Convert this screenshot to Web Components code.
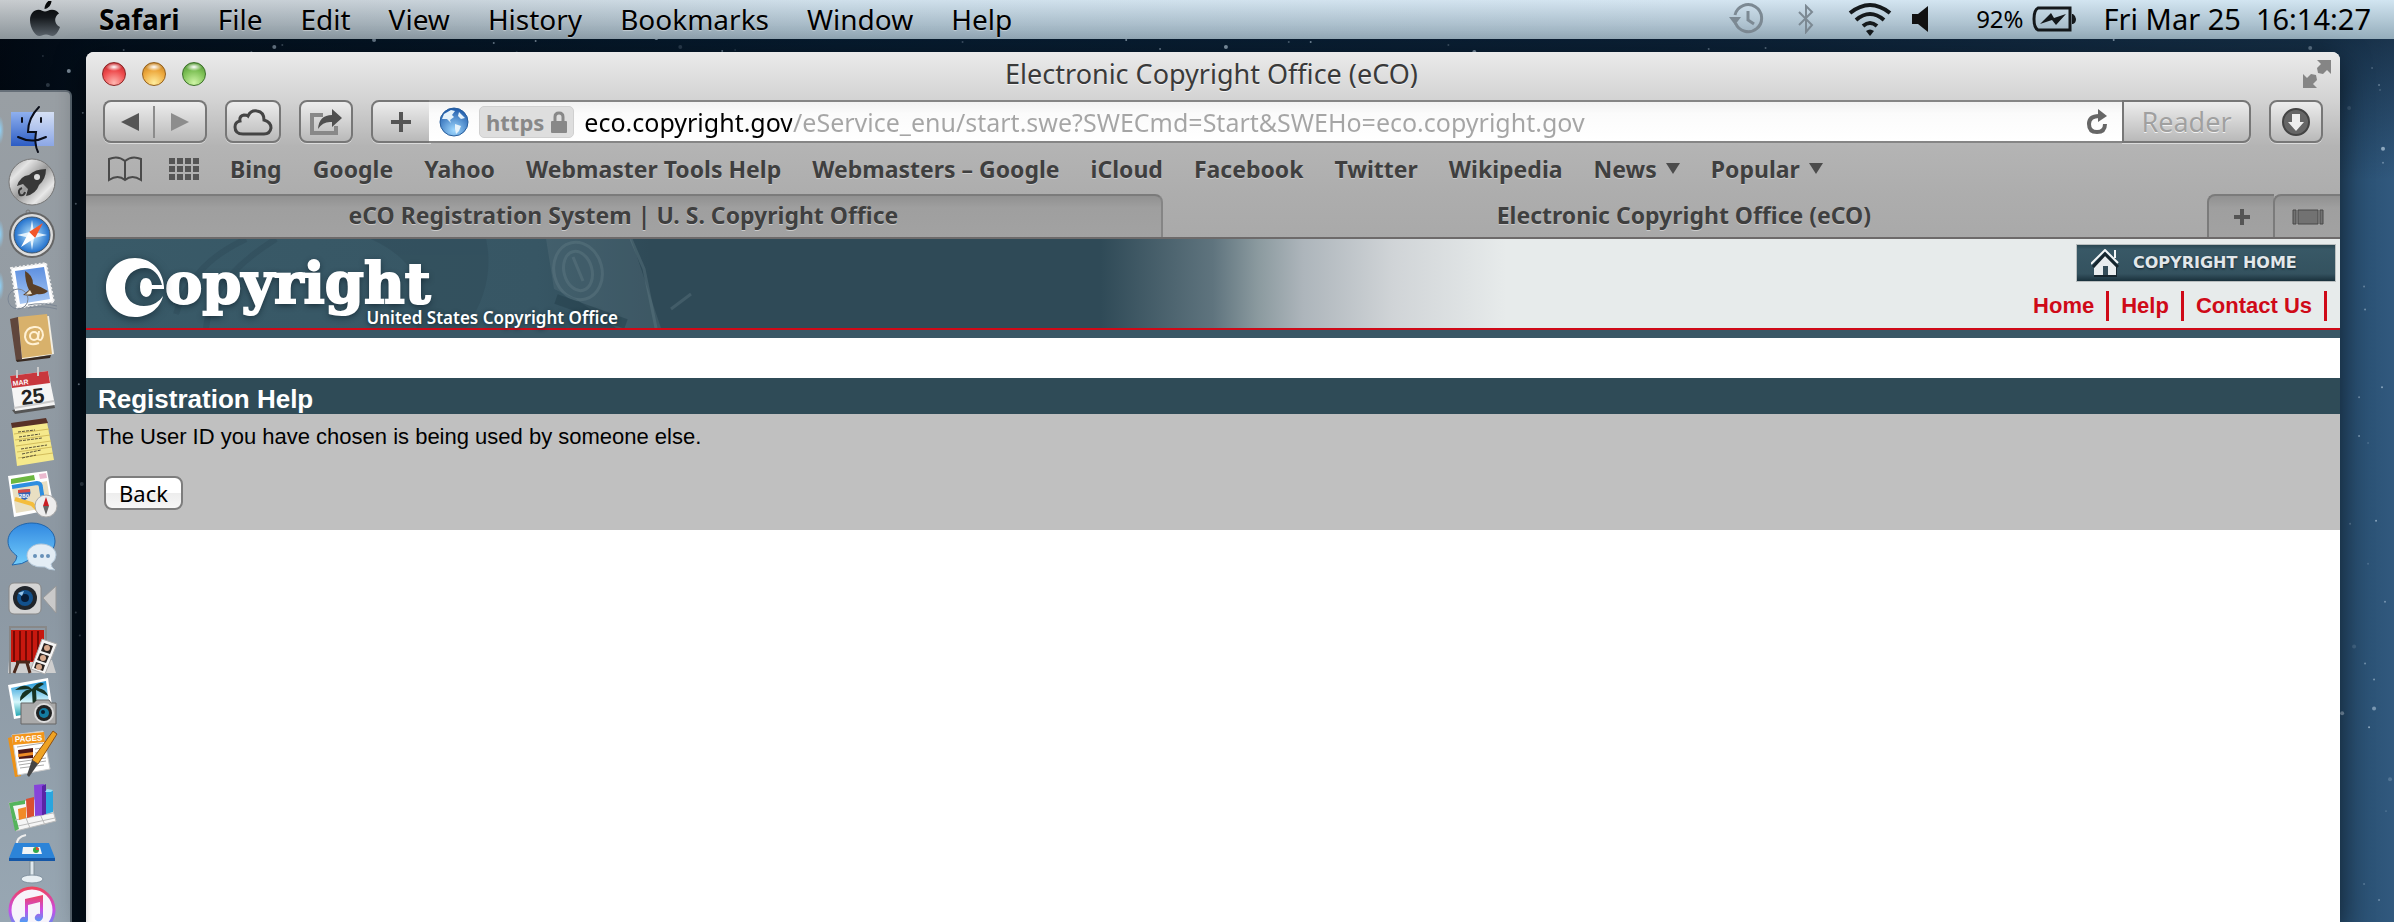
<!DOCTYPE html>
<html lang="en">
<head>
<meta charset="utf-8">
<title>Electronic Copyright Office (eCO)</title>
<style>
	html, body {
		height: 100%;
		margin: 0;
	}

	body {
		overflow: hidden;
		font-family: "Noto Sans", "Open Sans", sans-serif;
		color: #000;
	}
</style>
</head>
<body>
<desktop-screen>
	<menu-bar slot="menu">
		<menu-item strong>Safari</menu-item>
		<menu-item>File</menu-item>
		<menu-item>Edit</menu-item>
		<menu-item>View</menu-item>
		<menu-item>History</menu-item>
		<menu-item>Bookmarks</menu-item>
		<menu-item>Window</menu-item>
		<menu-item>Help</menu-item>
	</menu-bar>

	<app-dock slot="dock"></app-dock>

	<browser-window heading="Electronic Copyright Office (eCO)">
		<browser-toolbar slot="bars"></browser-toolbar>
		<bookmarks-bar slot="bars">
			<bookmark-link>Bing</bookmark-link>
			<bookmark-link>Google</bookmark-link>
			<bookmark-link>Yahoo</bookmark-link>
			<bookmark-link>Webmaster Tools Help</bookmark-link>
			<bookmark-link>Webmasters – Google</bookmark-link>
			<bookmark-link>iCloud</bookmark-link>
			<bookmark-link>Facebook</bookmark-link>
			<bookmark-link>Twitter</bookmark-link>
			<bookmark-link>Wikipedia</bookmark-link>
			<bookmark-link folder>News</bookmark-link>
			<bookmark-link folder>Popular</bookmark-link>
		</bookmarks-bar>
		<tab-strip slot="bars">
			<browser-tab>eCO Registration System | U. S. Copyright Office</browser-tab>
			<browser-tab active>Electronic Copyright Office (eCO)</browser-tab>
		</tab-strip>

		<site-header></site-header>
		<help-panel heading="Registration Help">The User ID you have chosen is being used by someone else.</help-panel>
	</browser-window>
</desktop-screen>

<script>
class BaseElement extends HTMLElement {
	constructor() {
		super();

		this.attachShadow({ mode: "open" });
		const template = document.createElement("template");
		template.innerHTML = this.constructor.markup;
		this.shadowRoot.append(template.content.cloneNode(true));
	}
}

class DesktopScreen extends BaseElement {
	connectedCallback() {
		// scatter the stars with a small fixed-seed generator
		let seed = 17;
		const next = () => (seed = (seed * 16807) % 2147483647) / 2147483647;
		let stars = "";
		for (let i = 0; i < 1400; i++) {
			const x = Math.round(next() * 2400);
			const y = Math.round(next() * 1000);
			const r = next() < 0.2 ? 2 : 1;
			stars += `<circle cx="${x}" cy="${y}" r="${r}" opacity="${(0.15 + next() * 0.45).toFixed(2)}"/>`;
		}
		this.shadowRoot.querySelector("g").innerHTML = stars;
	}
}

DesktopScreen.markup = `
<style>
	:host {
		display: flex;
		flex-direction: column;
		position: relative;
		height: 100vh;
		overflow: hidden;
		background:
			linear-gradient(180deg, rgba(2, 12, 24, 0.6) 0, rgba(2, 12, 24, 0) 180px),
			linear-gradient(90deg, #01060d 0, #04121f 5%, #0a2740 35%, #12304c 70%, #234868 97%, #31597e 100%);
	}

	.sky {
		position: absolute;
		inset: 0;
		width: 100%;
		height: 100%;
	}

	.work {
		display: flex;
		flex: 1;
		min-height: 0;
		position: relative;
	}

	::slotted([slot="menu"]) {
		position: relative;
	}
</style>
<svg class="sky" viewBox="0 0 2400 1000" preserveAspectRatio="xMidYMid slice" aria-hidden="true"><g fill="#cfe2f2"></g></svg>
<slot name="menu"></slot>
<div class="work">
	<slot name="dock"></slot>
	<slot></slot>
</div>
`;

class MenuItem extends BaseElement {}

MenuItem.markup = `
<style>
	:host {
		display: block;
	}

	button {
		border: 0;
		padding: 0;
		background: none;
		font: inherit;
		color: inherit;
		text-shadow: 0 1px 1px rgba(255, 255, 255, 0.4);
	}

	:host([strong]) button {
		font-weight: 700;
	}
</style>
<button type="button"><slot></slot></button>
`;

class MenuBar extends BaseElement {}

MenuBar.markup = `
<style>
	:host {
		display: flex;
		align-items: center;
		justify-content: space-between;
		height: 39px;
		box-sizing: border-box;
		padding: 0 23px 2px 29px;
		font-size: 28px;
		line-height: 34px;
		background:
			linear-gradient(180deg, rgba(255, 255, 255, 0.25), rgba(30, 50, 60, 0.28)),
			linear-gradient(90deg, #b6bbbf 0, #b6c2cb 15%, #bfd5e4 35%, #c6dcec 70%, #c2dcec 100%);
	}

	nav, .status {
		display: flex;
		align-items: center;
		gap: 38px;
	}

	svg {
		display: block;
	}

	.battery {
		display: flex;
		align-items: center;
		gap: 8px;
		font-size: 24px;
	}

	.glyphs {
		display: flex;
		align-items: center;
		gap: 34px;
		padding-right: 20px;
	}

	.status {
		gap: 28px;
	}

	.clock {
		font-size: 29px;
		white-space: pre;
	}

	.speaker {
		margin-left: -14px;
	}
</style>
<nav aria-label="Application menu">
	<svg width="32" height="36" viewBox="0 0 32 36" aria-hidden="true">
		<defs><linearGradient id="a" x1="0" y1="0" x2="0" y2="1"><stop offset="0" stop-color="#000"/><stop offset=".5" stop-color="#15191d"/><stop offset="1" stop-color="#59626a"/></linearGradient></defs>
		<path fill="url(#a)" d="M15.500 8C15.500 4 18 0 22.500 -2C23 3 20 7.500 15.500 8ZM16 10.500C18 10.500 19.500 8.700 23 8.700C26 8.700 28.700 10 30 12.500C24.500 16 25 23.500 31 26C29.500 30.500 26.500 35 23.500 35C21 35 20 33.500 17 33.500C14 33.500 12.800 35 10.500 35C6 35 1 27 1 19C1 12.500 5 8.700 9.500 8.700C12.500 8.700 14 10.500 16 10.500Z"/>
	</svg>
	<slot></slot>
</nav>
<div class="status">
	<div class="glyphs">
		<svg width="35" height="32" viewBox="0 0 35 32" fill="none" stroke="#7c8993" stroke-width="3" aria-hidden="true">
			<path d="M6.500 20A13.500 13.500 0 1 0 6 12"/><path d="M19 8V17L25 21"/><path fill="#7c8993" stroke="none" d="M0 14H12L6 22Z"/>
		</svg>
		<svg width="16" height="30" viewBox="0 0 16 30" fill="none" stroke="#7c8993" stroke-width="2" aria-hidden="true"><path d="M1 8L14 21L8 28V2L14 8L1 21"/></svg>
		<svg width="44" height="34" viewBox="0 0 44 34" fill="none" stroke="#15191c" stroke-width="4" aria-hidden="true">
			<path d="M2 11Q22 -5 42 11M8 18Q22 6 36 18M15 24Q22 18 29 24"/><path fill="#15191c" stroke="none" d="M18 29Q22 26 26 29L22 34Z"/>
		</svg>
		<svg class="speaker" width="16" height="26" viewBox="0 0 16 26" aria-hidden="true"><path fill="#111" d="M0 8H6L16 0V26L6 18H0Z"/></svg>
	</div>
	<div class="battery">
		<span>92%</span>
		<svg width="44" height="26" viewBox="0 0 44 26" aria-hidden="true">
			<path fill="none" stroke="#14181b" stroke-width="3" d="M6 2H38V24H6Q2 22 2 13Q2 4 6 2Z"/><path fill="#14181b" d="M40 8H41Q44 10 44 13Q44 17 41 18H40ZM8 18L19 7L22 12L34 8L24 19L20 14Z"/>
		</svg>
	</div>
	<time class="clock">Fri Mar 25  16:14:27</time>
</div>
`;

const dockIcons = {
	Finder: `
		<defs><linearGradient id="f" x1="0" y1="0" x2="0" y2="1"><stop offset="0" stop-color="#8fb0ee"/><stop offset="1" stop-color="#2c5cc4"/></linearGradient><linearGradient id="g" x1="0" y1="0" x2="0" y2="1"><stop offset="0" stop-color="#d5e0f5"/><stop offset="1" stop-color="#8ca7e6"/></linearGradient></defs>
		<path fill="url(#f)" d="M3 6H46V40H3Z"/><path fill="url(#g)" d="M28 6H46V40H29Q27 32 28 26H20Q21 14 28 6Z"/>
		<path fill="none" stroke="#0a0d18" stroke-width="2" stroke-linecap="round" d="M31 1Q20 12 20 26H28Q26 38 30 46M10 31Q24 38 38 31M14 12V16M33 12V16"/>`,
	Launchpad: `
		<defs><linearGradient id="f" x1="0" y1="0" x2="1" y2="1"><stop offset="0" stop-color="#9b9b9b"/><stop offset=".25" stop-color="#e4e4e4"/><stop offset=".5" stop-color="#999"/><stop offset=".75" stop-color="#e8e8e8"/><stop offset="1" stop-color="#8d8d8d"/></linearGradient></defs>
		<circle cx="24" cy="24" r="23" fill="url(#f)" stroke="#777"/>
		<path fill="#383838" d="M38 11Q27 11 21 17Q12 18 9 28L15 26L20 31L18 38Q28 36 31 27Q38 21 38 11Z"/><circle cx="29" cy="19" r="3" fill="#ddd"/><path fill="none" stroke="#383838" stroke-width="2" d="M14 30Q9 32 12 37Q16 38 17 34"/>`,
	Safari: `
		<defs><radialGradient id="f"><stop offset="0" stop-color="#bfeaff"/><stop offset="1" stop-color="#1f6ecb"/></radialGradient></defs>
		<circle cx="20" cy="2" r="2" fill="none" stroke="#777"/>
		<circle cx="24" cy="25" r="23" fill="#666"/><circle cx="24" cy="25" r="21" fill="#ddd"/><circle cx="24" cy="25" r="18" fill="url(#f)" stroke="#456"/>
		<path fill="#eef8ff" opacity=".9" d="M24 10L26 22L39 25L26 28L24 40L22 28L9 25L22 22Z"/><path fill="#f2572a" d="M35 13L27 28L21 22Z"/><path fill="#fff" d="M13 37L21 22L27 28Z"/>`,
	Mail: `
		<defs><linearGradient id="f" x1="0" y1="0" x2="0" y2="1"><stop offset="0" stop-color="#5d8fdf"/><stop offset="1" stop-color="#a8c8f4"/></linearGradient></defs>
		<path fill="#fff" stroke="#eee" stroke-width="2" stroke-dasharray="2 2" d="M3 6L38 1L46 40L9 46Z"/><path fill="url(#f)" d="M7 9L36 5L42 37L12 42Z"/>
		<path fill="#5b4027" d="M17 9Q25 13 25 22Q34 25 40 29Q36 33 29 32L23 34L15 33L21 28Q17 20 17 9Z"/><path fill="#e8dcc4" d="M22 28L17 33L24 32Z"/><circle cx="10" cy="37" r="10" fill="none" stroke="#7c8795"/><path d="M20 43Q34 40 49 44M20 46Q34 43 49 47" fill="none" stroke="#7c8795"/>`,
	Contacts: `
		<path fill="#f4efe3" d="M10 4L41 2L46 40L14 46Z"/><path fill="#d8b16b" d="M10 3L39 0L44 40L14 44Z"/><path fill="#60463c" d="M2 5L10 3L14 45L8 47Z"/><path fill="#382a22" d="M8 46L43 41L42 44L9 48Z"/>
		<g fill="none" stroke="#fff1d4" stroke-width="2"><circle cx="26" cy="22" r="4"/><path d="M31 17L30 25Q34 28 35 21Q34 12 26 13Q17 14 17 23Q19 33 31 29"/></g>`,
	Calendar: `
		<path fill="#555" d="M4 44L46 38L47 42L7 48Z"/><path fill="#f5f5f5" d="M2 10L40 5L47 39L7 45Z"/><path fill="#c8373d" d="M2 10L40 5L42 17L4 22Z"/><path stroke="#ccc" stroke-width="2" fill="none" d="M9 4V12M30 1V10M6 42L46 35"/>
		<text x="5" y="20" font-size="7" font-weight="700" fill="#fff" font-family="Liberation Sans, sans-serif" transform="rotate(-7 5 20)">MAR</text>
		<text x="14" y="39" font-size="21" font-weight="700" fill="#222" font-family="Liberation Sans, sans-serif" transform="rotate(-7 14 39)">25</text>`,
	Notes: `
		<path fill="#f5e98c" d="M4 8L39 4L46 42L9 48Z"/><path fill="#583127" d="M3 5L38 0L40 5L4 10Z"/><path stroke="#d3bd5c" fill="none" d="M6 16L41 11M7 22L42 17M8 28L43 23M9 34L44 29M10 40L45 35"/>
		<path stroke="#5a5138" stroke-dasharray="3 1" fill="none" d="M10 14L27 12M11 19L32 16M11 23L34 20M13 31L39 27M14 36L33 32M14 40L28 37"/>`,
	Maps: `
		<path fill="#fff" d="M0 6L39 1L46 39L6 47Z"/><path fill="#e9dfc2" d="M4 18L39 11L43 37L8 43Z"/><path fill="#6cb840" d="M3 9L26 5L27 10L3 14Z"/><path fill="#eab9cf" d="M31 4L38 3L39 8L32 9Z"/>
		<path stroke="#2d8ee0" stroke-width="4" fill="none" d="M4 17L29 13Q33 13 33 18L35 30"/><path stroke="#f4bd3d" stroke-width="4" fill="none" d="M7 29L24 34L34 44"/><path fill="#3464b3" d="M10 20L22 19Q24 27 17 30Q10 29 10 20Z"/><path fill="#d54845" d="M10 20L22 19V22L10 23Z"/>
		<text x="11" y="28" font-size="6" font-weight="700" fill="#fff" font-family="Liberation Sans, sans-serif">280</text>
		<circle cx="38" cy="36" r="11" fill="#eee" stroke="#aaa"/><path fill="#c91f25" d="M38 27L41 36H35Z"/><path fill="#666" d="M38 45L41 36H35Z"/>`,
	Messages: `
		<defs><linearGradient id="f" x1="0" y1="0" x2="0" y2="1"><stop offset="0" stop-color="#3188e0"/><stop offset="1" stop-color="#73cdfc"/></linearGradient></defs>
		<path fill="url(#f)" stroke="#2165aa" d="M24 1C37 1 47 9 47 19C47 30 36 37 23 37Q14 43 4 43Q9 38 9 34C4 30 0 26 0 19C0 9 11 1 24 1Z"/>
		<path fill="#e3edf5" stroke="#b4c8d9" d="M33 22C42 22 48 27 48 33Q48 38 43 42Q43 45 47 48Q40 48 37 45Q20 46 19 34C19 27 25 22 33 22Z"/><g fill="#6791b9"><circle cx="27" cy="34" r="2"/><circle cx="34" cy="34" r="2"/><circle cx="40" cy="34" r="2"/></g>`,
	FaceTime: `
		<rect x="1" y="9" width="32" height="31" rx="5" fill="#d4d4d4" stroke="#888"/><path fill="#cacaca" stroke="#999" d="M35 24L48 12V39Z"/><circle cx="17" cy="24" r="12" fill="#20252b"/><circle cx="17" cy="24" r="8" fill="#12518d"/><circle cx="17" cy="24" r="4" fill="#071b35"/><path fill="#9bc8ec" d="M10 19L16 17L14 22Z"/>`,
	"Photo Booth": `
		<path fill="#cfcfcf" d="M1 34H44L48 47H0Z"/><path fill="#c7180f" d="M3 4H36V36H3Z"/><path stroke="#780904" stroke-width="2" fill="none" d="M6 5V35M12 5V35M18 5V35M24 5V35M30 5V35"/><path fill="none" stroke="#888" stroke-width="2" d="M2 48V1H38V15"/><path stroke="#4a281b" stroke-width="3" fill="none" d="M8 36H22M10 37L6 47M19 37L22 47"/>
		<path fill="#f5f5f5" stroke="#aaa" d="M34 13L49 18L37 48L23 43Z"/><path fill="#2a2320" d="M36 17L45 20L42 28L33 25ZM32 27L41 30L38 37L29 34ZM28 36L37 39L35 45L26 42Z"/><g fill="#d8a98c"><circle cx="39" cy="22" r="3"/><circle cx="35" cy="32" r="3"/><circle cx="31" cy="41" r="3"/></g>`,
	iPhoto: `
		<defs><linearGradient id="f" x1="0" y1="0" x2="0" y2="1"><stop offset="0" stop-color="#1992d5"/><stop offset=".6" stop-color="#d6f7fb"/><stop offset="1" stop-color="#22a6b2"/></linearGradient></defs>
		<path fill="#fff" d="M0 7L40 0L45 34L6 41Z"/><path fill="url(#f)" d="M3 10L38 3L42 32L8 38Z"/><path fill="#173323" d="M24 11Q31 2 36 6L30 10Q38 11 40 18L28 12L29 31H25L24 13L12 23Q12 13 22 11L7 12Q17 4 24 11Z"/>
		<path fill="#aaa" stroke="#666" d="M13 25H26L29 22H41L43 25H48V46H13Z"/><circle cx="36" cy="35" r="10" fill="#ddd"/><circle cx="36" cy="35" r="8" fill="#222"/><circle cx="36" cy="35" r="5" fill="#147ba1"/><circle cx="35" cy="34" r="2" fill="#091c2e"/>`,
	Pages: `
		<path fill="#ee9217" d="M0 8L8 6L13 46L7 47Z"/><path fill="#fff" stroke="#ccc" d="M4 5L35 1L42 39L10 45Z"/><path fill="#f3951a" d="M4 5L36 2L37 12L5 15Z"/><text x="7" y="12" font-size="8" font-weight="700" fill="#fff" font-family="Liberation Sans, sans-serif" transform="rotate(-3 7 12)">PAGES</text>
		<path stroke="#aaa" fill="none" d="M9 17L35 13M10 32L38 28M11 35L38 31M12 38L36 35M27 19L34 18M27 23L34 22"/><path fill="#4e1818" d="M10 20L25 18V28L11 29Z"/><path fill="#ee8d27" d="M10 24L25 22V25L10 27Z"/><path fill="#efa323" stroke="#8e5011" d="M45 1L49 4L30 34L24 30Z"/><path fill="#444" d="M24 30L30 34L21 47L19 45Z"/>`,
	Numbers: `
		<path fill="#f5f5f5" stroke="#bbb" d="M1 21L41 15L48 39L8 49Z"/><path fill="#55b45c" d="M1 21L17 18V22L5 24L11 47L7 49Z"/><path stroke="#bbb" fill="none" d="M7 38L45 31M10 44L47 36M16 31L22 46M31 30L37 43"/>
		<path fill="#f18a29" d="M10 27L18 25V36L11 38Z"/><path fill="#d94f31" d="M18 17L26 15V34L19 36Z"/><path fill="#8743da" d="M26 3L36 2V33L27 34Z"/><path fill="#5925a6" d="M34 4L38 2V32L34 33Z"/><path fill="#2ba6df" d="M38 10L45 9V30L38 32Z"/><path fill="#91dff7" d="M37 10L39 7L45 8L43 10Z"/>`,
	Keynote: `
		<path fill="none" stroke="#eee" stroke-width="2" d="M9 11Q8 3 18 1"/><path fill="#dfe8ed" stroke="#7f8d96" d="M22 27H26V45H22Z"/><ellipse cx="24" cy="45" rx="11" ry="4" fill="#e8eff3" stroke="#8292a0"/><path fill="#2c84d8" d="M7 9H41L47 24H1Z"/><path fill="#1457a7" d="M1 24H47V27H1Z"/><path fill="#f2f5f5" d="M15 13H32L34 20H14Z"/><circle cx="28" cy="16" r="3" fill="#35a849"/><path fill="#e24d2f" d="M28 13A3 3 0 0 1 31 16H28Z"/>`,
	iTunes: `
		<defs><linearGradient id="f" x1="0" y1="0" x2="0" y2="1"><stop offset="0" stop-color="#f0425d"/><stop offset=".5" stop-color="#c94de6"/><stop offset="1" stop-color="#3aa9f6"/></linearGradient></defs>
		<circle cx="24" cy="24" r="22" fill="#f7f4fb" stroke="url(#f)" stroke-width="3"/><path fill="url(#f)" d="M17 13L35 9V31Q34 36 29 35Q25 33 28 29Q30 27 32 28V16L20 19V34Q19 39 14 38Q10 36 13 32Q15 30 17 31Z"/>`,
};

class DockIcon extends BaseElement {
	connectedCallback() {
		const name = this.getAttribute("name");
		const button = this.shadowRoot.querySelector("button");
		button.setAttribute("aria-label", name);
		button.innerHTML = `<svg width="48" height="48" viewBox="0 0 48 48" aria-hidden="true">${dockIcons[name]}</svg>`;
	}
}

DockIcon.markup = `
<style>
	:host {
		display: block;
		padding-left: 8px;
	}

	:host([running]) {
		background: radial-gradient(ellipse 4px 14px at 0 50%, #8fd0f5, rgba(143, 208, 245, 0));
	}

	button {
		display: block;
		border: 0;
		padding: 0;
		background: none;
	}

	svg {
		display: block;
		overflow: visible;
	}
</style>
<button type="button"></button>
`;

class AppDock extends BaseElement {
	connectedCallback() {
		for (let name of Object.keys(dockIcons)) {
			const icon = document.createElement("dock-icon");
			icon.setAttribute("name", name);
			if (["Finder", "Safari", "Mail"].includes(name)) {
				icon.setAttribute("running", "");
			}
			this.shadowRoot.append(icon);
		}
	}
}

AppDock.markup = `
<style>
	:host {
		display: flex;
		flex-direction: column;
		flex: none;
		gap: 4px;
		box-sizing: border-box;
		width: 72px;
		margin-top: 51px;
		padding-top: 14px;
		overflow: hidden;
		border-top: 2px solid #666f78;
		border-right: 2px solid #58656f;
		border-top-right-radius: 6px;
		background: linear-gradient(180deg, #999fa4, #8c98a3 60%, #98a7b3);
	}
</style>
`;

class BrowserWindow extends BaseElement {
	connectedCallback() {
		this.shadowRoot.querySelector("h1").textContent = this.getAttribute("heading");
	}
}

BrowserWindow.markup = `
<style>
	:host {
		display: flex;
		flex-direction: column;
		flex: 1;
		min-width: 0;
		margin: 13px 54px 0 14px;
		border-radius: 8px 8px 0 0;
		background: #fff;
		box-shadow: 0 10px 30px rgba(0, 0, 0, 0.6);
		overflow: hidden;
	}

	.chrome {
		background: linear-gradient(180deg, #ebebeb 0, #d3d3d3 48px, #b4b4b4 94px, #adadad 142px, #a9a9a9 100%);
	}

	.title {
		display: grid;
		grid-template-columns: 1fr auto 1fr;
		align-items: center;
		height: 48px;
		padding: 0 9px 4px 16px;
		box-sizing: border-box;
	}

	.lights {
		display: flex;
		gap: 16px;
	}

	.lights button {
		width: 24px;
		height: 24px;
		border: 1px solid #8a2626;
		border-radius: 50%;
		padding: 0;
		background: radial-gradient(ellipse 8px 4px at 50% 4px, #fff, rgba(255, 255, 255, 0)), radial-gradient(circle at 50% 90%, #ffb6b0, #ee4a4c 55%, #b52329);
	}

	.lights .minimize {
		border-color: #93601d;
		background: radial-gradient(ellipse 8px 4px at 50% 4px, #fff, rgba(255, 255, 255, 0)), radial-gradient(circle at 50% 90%, #ffed9c, #eda83d 55%, #b57720);
	}

	.lights .zoom {
		border-color: #3c702a;
		background: radial-gradient(ellipse 8px 4px at 50% 4px, #fff, rgba(255, 255, 255, 0)), radial-gradient(circle at 50% 90%, #cef5a6, #7dc055 55%, #498a30);
	}

	h1 {
		margin: 0;
		padding-right: 10px;
		font-size: 27px;
		font-weight: 400;
		line-height: 40px;
		color: #3a3a3a;
		text-shadow: 0 1px 0 #f5f5f5;
	}

	.expand {
		justify-self: end;
		border: 0;
		padding: 0;
		background: none;
	}

	.expand svg {
		display: block;
	}

	main {
		flex: 1;
		box-shadow: inset 6px 0 6px -6px rgba(0, 0, 0, 0.2);
	}
</style>
<div class="chrome">
	<div class="title">
		<div class="lights">
			<button type="button" aria-label="Close"></button>
			<button type="button" class="minimize" aria-label="Minimize"></button>
			<button type="button" class="zoom" aria-label="Zoom"></button>
		</div>
		<h1></h1>
		<button type="button" class="expand" aria-label="Full screen">
			<svg width="28" height="28" viewBox="0 0 28 28" aria-hidden="true"><path fill="#858585" d="M14 0H28V14L24 10L20 14L15 13L14 8L18 4ZM0 14L4 18L8 14L13 15L14 20L10 24L14 28H0Z"/></svg>
		</button>
	</div>
	<slot name="bars"></slot>
</div>
<main><slot></slot></main>
`;

class ToolButton extends BaseElement {
	connectedCallback() {
		this.shadowRoot.querySelector("button").setAttribute("aria-label", this.getAttribute("label"));
	}
}

ToolButton.markup = `
<style>
	:host {
		display: flex;
	}

	button {
		display: flex;
		align-items: center;
		justify-content: center;
		box-sizing: border-box;
		width: var(--tool-width, 54px);
		border: solid #777;
		border-width: var(--tool-border, 2px);
		border-radius: var(--tool-radius, 8px);
		padding: 0;
		background: var(--tool-divider, linear-gradient(transparent, transparent)), linear-gradient(180deg, #ededed, #b9b9b9);
		box-shadow: 0 1px 0 rgba(255, 255, 255, 0.5);
		font: inherit;
		color: #a0a0a0;
		text-shadow: 0 1px 0 #f2f2f2;
	}
</style>
<button type="button"><slot></slot></button>
`;

class BrowserToolbar extends BaseElement {}

BrowserToolbar.markup = `
<style>
	:host {
		display: flex;
		gap: 18px;
		height: 43px;
		padding: 0 17px;
	}

	svg {
		display: block;
	}

	.pair, .address {
		display: flex;
	}

	.pair tool-button:first-child {
		--tool-width: 52px;
		--tool-border: 2px 0 2px 2px;
		--tool-radius: 8px 0 0 8px;
		--tool-divider: linear-gradient(#8c8c8c, #8c8c8c) right / 2px 32px no-repeat;
	}

	.pair tool-button:last-child {
		--tool-width: 52px;
		--tool-border: 2px 2px 2px 0;
		--tool-radius: 0 8px 8px 0;
	}

	.address tool-button:first-child {
		--tool-width: 60px;
		--tool-radius: 8px 0 0 8px;
		margin-right: -2px;
	}

	.address tool-button:last-child {
		--tool-width: 129px;
		--tool-radius: 0 8px 8px 0;
	}

	.cloud {
		--tool-width: 56px;
	}

	.address {
		flex: 1;
		min-width: 0;
		font-size: 27px;
	}

	.field {
		display: flex;
		flex: 1;
		align-items: center;
		gap: 10px;
		min-width: 0;
		padding: 0 14px 0 10px;
		border: solid #858585;
		border-width: 2px 0;
		background: linear-gradient(180deg, #f2f2f2, #fbfbfb 30%, #fff);
		font-size: 25px;
	}

	.secure {
		display: flex;
		align-items: center;
		gap: 7px;
		padding: 0 6px;
		border: 1px solid #d0d0d0;
		border-radius: 5px;
		line-height: 30px;
		font-weight: 700;
		font-size: 22px;
		background: #dedede;
		color: #888;
	}

	/* host name is black, the rest of the address is grey */
	input {
		flex: 1;
		min-width: 0;
		border: 0;
		padding: 0;
		outline: 0;
		font: inherit;
		color: transparent;
		background: linear-gradient(90deg, #000 208px, #a5a5a5 208px);
		-webkit-background-clip: text;
		background-clip: text;
	}

	.reload {
		border: 0;
		padding: 0;
		background: none;
	}
</style>
<div class="pair">
	<tool-button label="Back"><svg width="18" height="18" viewBox="0 0 18 18"><path fill="#555" d="M18 0V18L0 9Z"/></svg></tool-button>
	<tool-button label="Forward"><svg width="18" height="18" viewBox="0 0 18 18"><path fill="#8d8d8d" d="M0 0V18L18 9Z"/></svg></tool-button>
</div>
<tool-button class="cloud" label="iCloud tabs"><svg width="40" height="28" viewBox="0 0 40 28"><path fill="none" stroke="#444" stroke-width="3" d="M10 26Q2 26 2 19Q2 14 7 13Q6 8 11 7Q14 7 15 8Q18 2 24 3Q31 4 31 12Q38 14 38 20Q37 26 31 26Z"/></svg></tool-button>
<tool-button label="Share"><svg width="32" height="26" viewBox="0 0 32 26"><path fill="none" stroke="#888" stroke-width="4" d="M13 6H2V24H26V17"/><path fill="#505050" d="M22 0L32 9L22 18V13Q13 12 8 20Q9 6 22 6Z"/></svg></tool-button>
<div class="address">
	<tool-button label="Add bookmark"><svg width="22" height="22" viewBox="0 0 22 22"><path fill="#555" d="M9 1H13V9H21V13H13V21H9V13H1V9H9Z"/></svg></tool-button>
	<div class="field">
		<svg width="30" height="30" viewBox="0 0 30 30" aria-hidden="true">
			<defs><radialGradient id="b" cx=".5" cy=".8" r=".8"><stop offset="0" stop-color="#9ed8ff"/><stop offset="1" stop-color="#1b57a8"/></radialGradient></defs>
			<circle cx="15" cy="15" r="14" fill="url(#b)" stroke="#285e9c"/><path fill="#e5f2fa" d="M5 7L12 3L16 4L13 8L15 10L11 13L12 16L8 12L3 12ZM16 17L22 19L20 24L17 27L16 22ZM20 5L26 11L22 12L19 9Z"/>
		</svg>
		<span class="secure">https <svg width="16" height="22" viewBox="0 0 16 22" aria-hidden="true"><path fill="none" stroke="#888" stroke-width="3" d="M4 11V6Q4 2 8 2Q12 2 12 6V11"/><rect y="10" width="16" height="12" rx="1" fill="#888"/></svg></span>
		<input type="text" aria-label="Address" spellcheck="false" value="eco.copyright.gov/eService_enu/start.swe?SWECmd=Start&amp;SWEHo=eco.copyright.gov">
		<button type="button" class="reload" aria-label="Reload"><svg width="22" height="26" viewBox="0 0 22 26"><path fill="none" stroke="#666" stroke-width="4" d="M13 7Q3 7 3 15Q3 23 11 23Q19 23 19 15"/><path fill="#666" d="M12 0L21 7L12 13Z"/></svg></button>
	</div>
	<tool-button label="Reader">Reader</tool-button>
</div>
<tool-button label="Downloads"><svg width="28" height="28" viewBox="0 0 28 28"><circle cx="14" cy="14" r="13" fill="#666" stroke="#444" stroke-width="2"/><path fill="#eee" d="M10 6H18V14H22L14 23L6 14H10Z"/></svg></tool-button>
`;

class BookmarkLink extends BaseElement {}

BookmarkLink.markup = `
<style>
	:host {
		display: block;
	}

	a {
		display: flex;
		align-items: center;
		gap: 9px;
		color: #3f3f3f;
		text-decoration: none;
		text-shadow: 0 1px 0 #ccc;
	}

	svg {
		display: none;
	}

	:host([folder]) svg {
		display: block;
	}
</style>
<a href="#"><slot></slot><svg width="14" height="11" viewBox="0 0 14 11" aria-hidden="true"><path fill="#4c4c4c" d="M0 0H14L7 11Z"/></svg></a>
`;

class BookmarksBar extends BaseElement {}

BookmarksBar.markup = `
<style>
	:host {
		display: flex;
		align-items: center;
		gap: 31px;
		height: 51px;
		padding: 0 22px;
		box-sizing: border-box;
		white-space: nowrap;
		font-size: 23px;
		font-weight: 700;
		line-height: 30px;
	}

	.views {
		display: flex;
		align-items: center;
		gap: 27px;
	}

	button {
		border: 0;
		padding: 0;
		background: none;
	}

	svg {
		display: block;
	}
</style>
<div class="views">
	<button type="button" aria-label="Show all bookmarks"><svg width="34" height="26" viewBox="0 0 34 26"><path fill="none" stroke="#4a4a4a" stroke-width="2" d="M17 5Q10 -1 1 3V24Q10 18 17 24Q24 18 33 24V3Q24 -1 17 5V24"/></svg></button>
	<button type="button" aria-label="Top sites"><svg width="30" height="22" viewBox="0 0 30 22"><path stroke="#555" stroke-width="6" stroke-dasharray="6 2" fill="none" d="M0 3H30M0 11H30M0 19H30"/></svg></button>
</div>
<slot></slot>
`;

class BrowserTab extends BaseElement {}

BrowserTab.markup = `
<style>
	:host {
		display: flex;
		flex: 33;
		min-width: 0;
	}

	:host([active]) {
		flex: 32;
	}

	button {
		flex: 1;
		min-width: 0;
		border: 0;
		border-top: 2px solid #7b7b7b;
		border-right: 2px solid #858585;
		border-top-right-radius: 8px;
		padding: 0 8px 4px;
		background: linear-gradient(180deg, #919191, #9f9f9f 12px, #a2a2a2);
		font: inherit;
		color: #3f3f3f;
		text-shadow: 0 1px 0 #ccc;
	}

	:host([active]) button {
		border-color: transparent;
		background: none;
	}
</style>
<button type="button" role="tab"><slot></slot></button>
`;

class TabStrip extends BaseElement {}

TabStrip.markup = `
<style>
	:host {
		display: flex;
		height: 45px;
		box-sizing: border-box;
		border-bottom: 2px solid #6d6a6a;
		font-size: 23px;
		font-weight: 700;
	}

	.tabs {
		display: flex;
		flex: 1;
		min-width: 0;
	}

	.action {
		display: flex;
		align-items: center;
		justify-content: center;
		width: 67px;
		box-sizing: border-box;
		border: 0;
		border-top: 2px solid #7b7b7b;
		border-left: 2px solid #7b7b7b;
		border-top-left-radius: 8px;
		padding: 0;
		background: linear-gradient(180deg, #919191, #9f9f9f 12px, #a2a2a2);
	}

	.action + .action {
		margin-left: -1px;
	}
</style>
<div class="tabs" role="tablist"><slot></slot></div>
<button type="button" class="action" aria-label="New tab"><svg width="16" height="16" viewBox="0 0 16 16"><path fill="#555" d="M6 0H10V6H16V10H10V16H6V10H0V6H6Z"/></svg></button>
<button type="button" class="action" aria-label="Show all tabs"><svg width="32" height="16" viewBox="0 0 32 16"><path fill="#727272" stroke="#484848" d="M6 1H26V15H6ZM1 1H4V15H1ZM28 1H31V15H28Z"/></svg></button>
`;

class SiteHeader extends BaseElement {}

SiteHeader.markup = `
<style>
	:host {
		display: block;
		border-bottom: 8px solid #3a5866;
		font-family: "Liberation Sans", Arial, sans-serif;
	}

	header {
		display: flex;
		justify-content: space-between;
		position: relative;
		height: 91px;
		box-sizing: border-box;
		border-bottom: 2px solid #cf0a18;
		background: linear-gradient(90deg, #395a68 0, #375664 20%, #2f4a57 25%, #2f4a57 45%, #5f747e 50%, #8b9a9f 52%, #adb5bb 54%, #d0d4d7 58%, #e7ebeb 63%);
	}

	.art {
		position: absolute;
		inset: 0 auto 0 0;
		height: 89px;
	}

	.brand {
		display: flex;
		position: relative;
		align-items: flex-start;
		padding-left: 20px;
		color: #fff;
	}

	.mark {
		margin-top: 19px;
		filter: drop-shadow(0 2px 4px rgba(10, 25, 35, 0.6));
	}

	.word {
		font: 700 56px/88px "DejaVu Serif", serif;
		-webkit-text-stroke: 2px #fff;
		text-shadow: 0 2px 6px rgba(10, 25, 35, 0.8);
	}

	.tagline {
		align-self: flex-end;
		margin-left: -64px;
		font: 600 17px/20px "Noto Sans", "Open Sans", sans-serif;
		text-shadow: 0 1px 4px #142832;
	}

	.links {
		display: flex;
		flex-direction: column;
		align-items: flex-end;
		gap: 9px;
		padding: 5px 4px 0 0;
	}

	a {
		text-decoration: none;
	}

	.home {
		display: flex;
		align-items: center;
		gap: 14px;
		box-sizing: border-box;
		width: 260px;
		height: 38px;
		padding-left: 14px;
		border: 1px solid #b9bebf;
		background: linear-gradient(180deg, #2a4651, #385866 12%, #34525f 80%, #1a313c);
		font: 700 16px/20px "DejaVu Sans", sans-serif;
		color: #e2e7ea;
		text-shadow: 0 1px 2px #10222b;
	}

	nav {
		display: flex;
		gap: 12px;
		padding-right: 9px;
		font-size: 22px;
		font-weight: 700;
		line-height: 30px;
	}

	nav a {
		padding-right: 12px;
		border-right: 3px solid #cf0a18;
		color: #cf0a18;
	}
</style>
<header>
	<svg class="art" width="700" height="89" viewBox="0 0 700 89" aria-hidden="true">
		<g fill="none" stroke="#2c4653" opacity=".35"><path stroke-width="6" d="M90 75Q105 25 160 0M120 89Q125 40 190 0"/><path fill="#2c4653" stroke="none" d="M285 0H400Q410 45 380 89H330Q350 30 285 0Z"/></g>
		<path fill="#58737e" opacity=".35" d="M460 0L545 0L575 89H530L490 60L468 50Z"/><g fill="none" stroke="#6e8790" stroke-width="3" opacity=".3"><ellipse cx="492" cy="32" rx="24" ry="29" transform="rotate(-15 492 32)"/><ellipse cx="492" cy="32" rx="14" ry="20" transform="rotate(-15 492 32)"/><path d="M487 18L497 42M545 0L558 30L570 89M585 70L605 55"/></g><path stroke="#243f4b" stroke-width="10" opacity=".5" d="M470 60L540 85"/>
	</svg>
	<div class="brand">
		<svg class="mark" width="59" height="59" viewBox="0 0 59 59" aria-hidden="true"><path fill="#fff" fill-rule="evenodd" d="M29 0C44 0 57 11 58 29V31H46Q45 39 40 39Q34 38 34 29Q34 20 40 20Q45 20 46 27H56C53 16 47 10 39 10C27 10 19 18 19 30C19 41 27 48 38 48C47 48 54 43 57 38C54 51 42 59 29 59C12 59 0 46 0 30C0 13 12 0 29 0Z"/></svg>
		<span class="word">opyright</span>
		<span class="tagline">United States Copyright Office</span>
	</div>
	<div class="links">
		<a class="home" href="#">
			<svg width="28" height="28" viewBox="0 0 28 28" aria-hidden="true"><path fill="#15252d" d="M6 16H26V28H3V16Z"/><path fill="#e8ecee" d="M14 5L25 16V26H3V16Z"/><path fill="none" stroke="#15252d" stroke-width="3" d="M2 18L14 5L27 18"/><path fill="none" stroke="#f5f7f8" stroke-width="2" d="M0 15L14 1L27 14M24 1V9"/><path fill="#344d59" d="M12 17H17V26H12Z"/></svg>
			<span>COPYRIGHT HOME</span>
		</a>
		<nav aria-label="Site">
			<a href="#">Home</a>
			<a href="#">Help</a>
			<a href="#">Contact Us</a>
		</nav>
	</div>
</header>
`;

class HelpPanel extends BaseElement {
	connectedCallback() {
		this.shadowRoot.querySelector("h2").textContent = this.getAttribute("heading");
	}
}

HelpPanel.markup = `
<style>
	:host {
		display: block;
		margin-top: 40px;
		padding-bottom: 20px;
		background: #c0c0c0;
		font-family: "Liberation Sans", Arial, sans-serif;
	}

	h2 {
		margin: 0;
		padding: 6px 12px 0;
		background: #2f4b57;
		font-size: 26px;
		line-height: 30px;
		color: #fff;
	}

	p {
		margin: 0;
		padding: 9px 10px 0;
		font-size: 22px;
		line-height: 28px;
	}

	button {
		display: block;
		margin: 25px 0 0 18px;
		border: 2px solid #7d7d7d;
		border-radius: 8px;
		padding: 0 13px;
		background: linear-gradient(180deg, #fff 50%, #ededed 50%, #f7f7f7);
		font: 22px/30px "Noto Sans", "Open Sans", sans-serif;
		color: #000;
	}
</style>
<h2></h2>
<p><slot></slot></p>
<button type="button">Back</button>
`;

customElements.define("dock-icon", DockIcon);
customElements.define("app-dock", AppDock);
customElements.define("menu-item", MenuItem);
customElements.define("menu-bar", MenuBar);
customElements.define("tool-button", ToolButton);
customElements.define("browser-toolbar", BrowserToolbar);
customElements.define("bookmark-link", BookmarkLink);
customElements.define("bookmarks-bar", BookmarksBar);
customElements.define("browser-tab", BrowserTab);
customElements.define("tab-strip", TabStrip);
customElements.define("site-header", SiteHeader);
customElements.define("help-panel", HelpPanel);
customElements.define("browser-window", BrowserWindow);
customElements.define("desktop-screen", DesktopScreen);
</script>
</body>
</html>
